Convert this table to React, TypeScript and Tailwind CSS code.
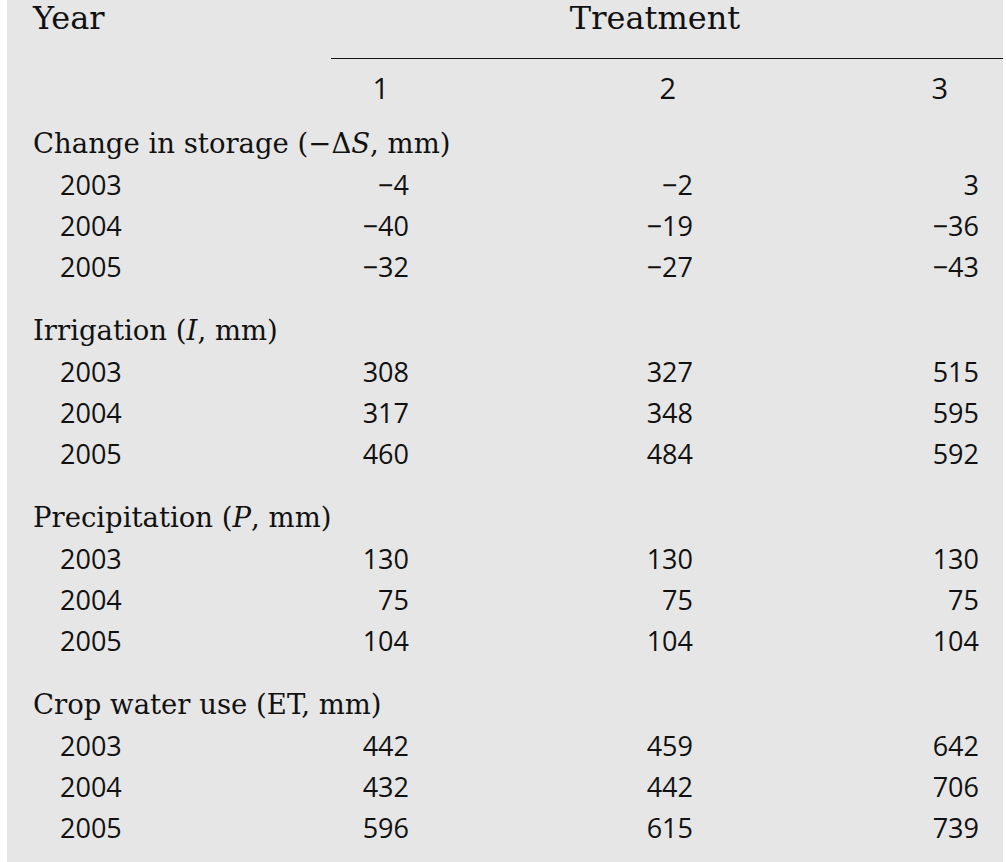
type Group = {
  label: React.ReactNode;
  rows: [string, string, string, string][];
};

const M = "\u2212";

const groups: Group[] = [
  {
    label: (
      <>
        Change in storage ({M}Δ<i>S</i>, mm)
      </>
    ),
    rows: [
      ["2003", `${M}4`, `${M}2`, "3"],
      ["2004", `${M}40`, `${M}19`, `${M}36`],
      ["2005", `${M}32`, `${M}27`, `${M}43`],
    ],
  },
  {
    label: (
      <>
        Irrigation (<i>I</i>, mm)
      </>
    ),
    rows: [
      ["2003", "308", "327", "515"],
      ["2004", "317", "348", "595"],
      ["2005", "460", "484", "592"],
    ],
  },
  {
    label: (
      <>
        Precipitation (<i>P</i>, mm)
      </>
    ),
    rows: [
      ["2003", "130", "130", "130"],
      ["2004", "75", "75", "75"],
      ["2005", "104", "104", "104"],
    ],
  },
  {
    label: <>Crop water use (ET, mm)</>,
    rows: [
      ["2003", "442", "459", "642"],
      ["2004", "432", "442", "706"],
      ["2005", "596", "615", "739"],
    ],
  },
];

const head = "font-['DejaVu_Serif',serif] text-[32px] leading-none";
const serif = "font-['DejaVu_Serif',serif] text-[27.5px]";
const sans = "font-['Open_Sans',sans-serif] text-[27px]";
const cols = "grid grid-cols-[298px_78px_284px_286px]";

export default function App() {
  return (
    <div className="min-h-[862px] bg-white text-[#111]">
      <div className="ml-[7px] h-[862px] w-[996px] bg-[#e6e6e6] pl-[26px]">
        {/* header */}
        <div className={`${cols} h-[36px] items-center`}>
          <div className={head}>Year</div>
          <div className={`${head} col-span-3 text-center`}>Treatment</div>
        </div>
        <div className="ml-[298px] mt-[22px] border-t border-[#111]" />
        <div className={`${cols} mt-[7px] h-[40px] items-center font-['Open_Sans',sans-serif] text-[29px]`}>
          <div />
          <div className="pr-[20px] text-right">1</div>
          <div className="pr-[17px] text-right">2</div>
          <div className="pr-[31px] text-right">3</div>
        </div>

        <div className="mt-[17px] flex flex-col gap-[22px]">
          {groups.map((g, gi) => (
            <div key={gi}>
              <div className={`flex h-[41.25px] items-center ${serif}`}>{g.label}</div>
              {g.rows.map((r) => (
                <div key={r[0]} className={`${cols} h-[41.25px] items-center ${sans}`}>
                  <div className="pl-[27px]">{r[0]}</div>
                  <div className="text-right">{r[1]}</div>
                  <div className="text-right">{r[2]}</div>
                  <div className="text-right">{r[3]}</div>
                </div>
              ))}
            </div>
          ))}
        </div>
      </div>
    </div>
  );
}
